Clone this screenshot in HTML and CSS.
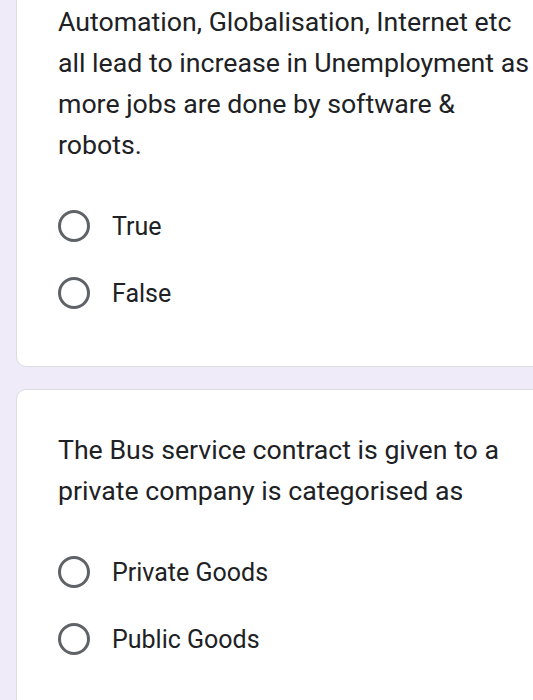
FILE: index.html
```html
<!DOCTYPE html>
<html>
<head>
<meta charset="utf-8">
<link rel="stylesheet" href="styles.css">
</head>
<body>
<div class="page">
  <div class="card first">
    <div class="question">Automation, Globalisation, Internet etc all lead to increase in Unemployment as more jobs are done by software &amp; robots.</div>
    <div class="options">
      <div class="option"><span class="radio"></span><span class="label">True</span></div>
      <div class="option"><span class="radio"></span><span class="label">False</span></div>
    </div>
  </div>
  <div class="card last">
    <div class="question">The Bus service contract is given to a private company is categorised as</div>
    <div class="options">
      <div class="option"><span class="radio"></span><span class="label">Private Goods</span></div>
      <div class="option"><span class="radio"></span><span class="label">Public Goods</span></div>
    </div>
  </div>
</div>
</body>
</html>
```
FILE: styles.css
```css
html, body {
  margin: 0;
  padding: 0;
  background: #efebf8;
  overflow: hidden;
  height: 700px;
}
.page {
  padding-left: 16px;
  display: flex;
  flex-direction: column;
  gap: 22px;
  font-family: Roboto, "Liberation Sans", sans-serif;
  color: #202124;
}
.card {
  background: #fff;
  border: 1px solid #dadce0;
  border-radius: 10px;
  width: 600px;
  padding: 40px 0 40px 41px;
}
.card.first {
  margin-top: -60px;
  padding-top: 61px;
  padding-bottom: 55px;
}
.card.last {
  padding-bottom: 80px;
}
.question {
  font-size: 26.7px;
  line-height: 41px;
  width: 478px;
}
.options {
  display: flex;
  flex-direction: column;
  gap: 31px;
  margin-top: 42px;
}
.option {
  display: flex;
  align-items: center;
  height: 36px;
}
.radio {
  width: 26px;
  height: 26px;
  border: 3px solid #5f6368;
  border-radius: 50%;
  flex: none;
}
.label {
  margin-left: 22px;
  font-size: 25px;
}
```
